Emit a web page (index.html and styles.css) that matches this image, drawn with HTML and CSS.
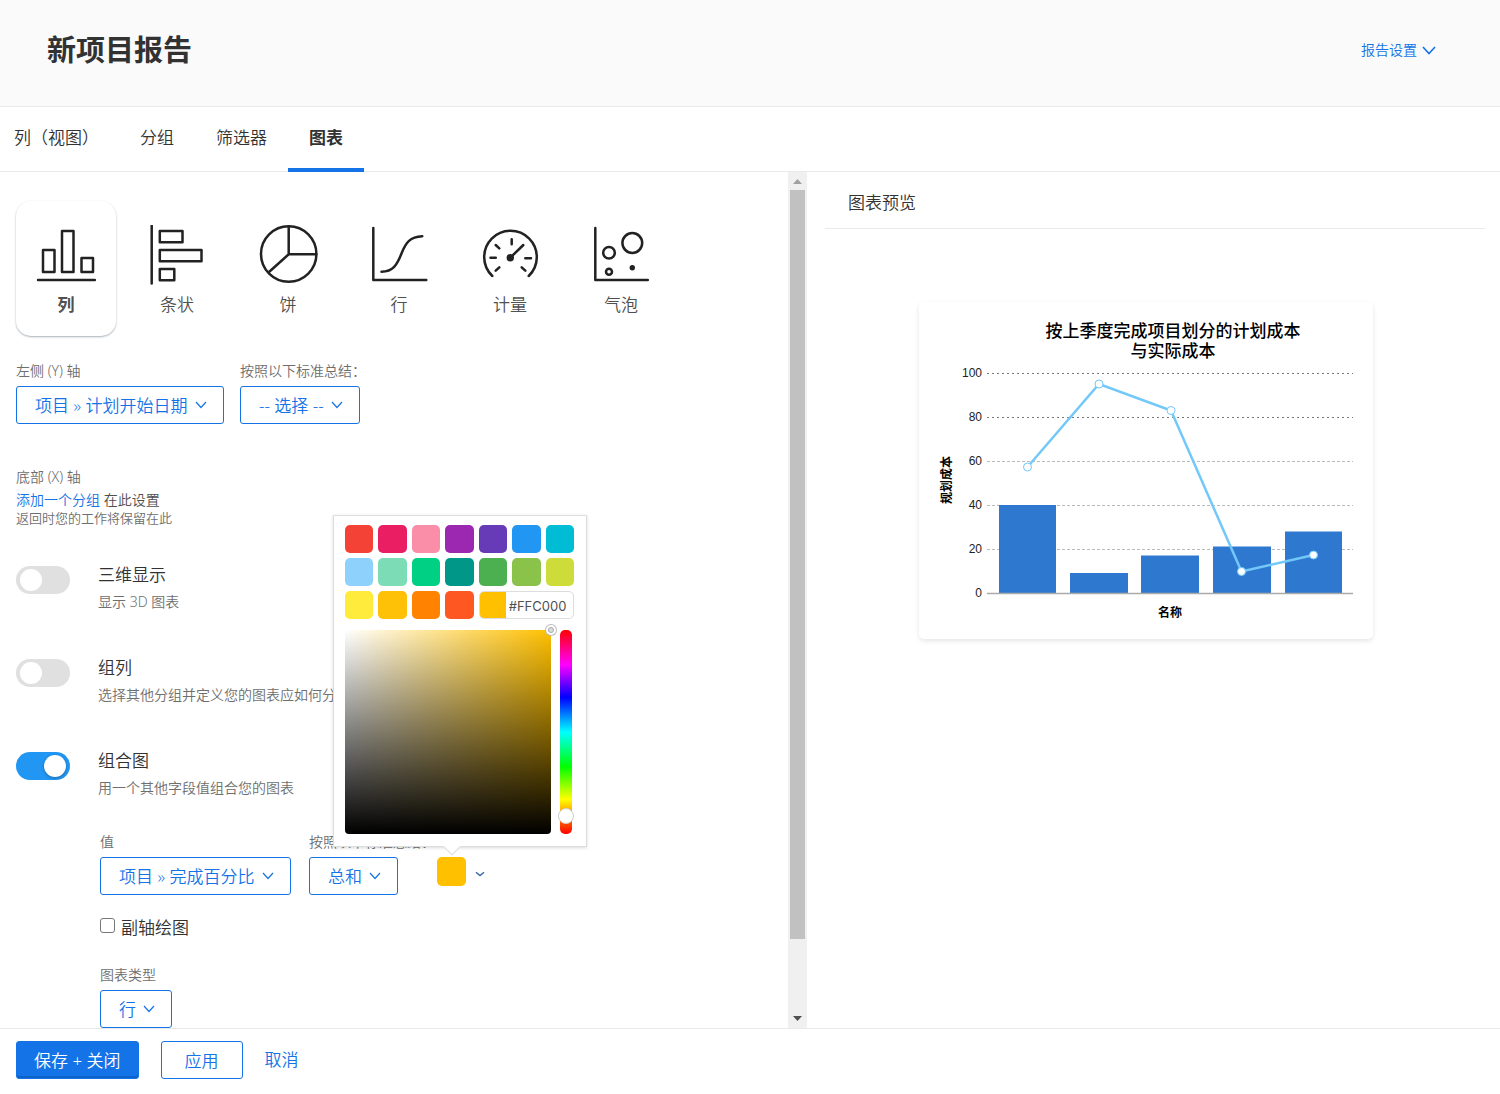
FILE: index.html
```html
<!DOCTYPE html>
<html lang="zh-CN">
<head>
<meta charset="utf-8">
<meta name="viewport" content="width=device-width, initial-scale=1">
<title>新项目报告</title>
<link rel="stylesheet" href="styles.css">
</head>
<body>
<header class="page-header">
  <h1 class="page-title">新项目报告</h1>
  <a class="settings-link" href="#settings">报告设置
    <svg width="14" height="9" viewBox="0 0 14 9" aria-hidden="true"><path d="M1 1l6 6.500L13 1"/></svg>
  </a>
</header>

<nav class="tabs">
  <a class="tab" href="#columns">列（视图）</a>
  <a class="tab" href="#groupings">分组</a>
  <a class="tab" href="#filters">筛选器</a>
  <a class="tab tab-active" href="#chart" aria-current="page">图表</a>
</nav>

<main class="workspace">
  <section class="editor">
    <div class="editor-content">
      <div class="chart-types">
        <button type="button" class="chart-type chart-type-active" aria-pressed="true">
          <svg class="type-icon" viewBox="0 0 60 60" aria-hidden="true"><path d="M2 55h57M7 25h11.500v22h-11.500zM26 6h11.500v41h-11.500zM45.500 33h11.500v14h-11.500z"/></svg>
          <span>列</span>
        </button>
        <button type="button" class="chart-type" aria-pressed="false">
          <svg class="type-icon" viewBox="0 0 60 60" aria-hidden="true"><path d="M4.700 0.500v58M12.800 6h22.700v11.300h-22.700zM12.800 25h41.700v11.300h-41.700zM12.800 44h14.500v11.300h-14.500z"/></svg>
          <span>条状</span>
        </button>
        <button type="button" class="chart-type" aria-pressed="false">
          <svg class="type-icon" viewBox="0 0 60 60" aria-hidden="true"><circle cx="30.700" cy="29" r="27.700"/><path d="M30.700 1.500v27.800h27.500M30.700 29.300L11 47"/></svg>
          <span>饼</span>
        </button>
        <button type="button" class="chart-type" aria-pressed="false">
          <svg class="type-icon" viewBox="0 0 60 60" aria-hidden="true"><path d="M4.300 3v52h53M12.500 46.700C24 46.700 28 40 32.500 28.500C37 17 41 12 53.300 11.300"/></svg>
          <span>行</span>
        </button>
        <button type="button" class="chart-type" aria-pressed="false">
          <svg class="type-icon" viewBox="0 0 60 60" aria-hidden="true"><path d="M12.300 51A26.300 26.300 0 1 1 48.700 51M31.700 14.300v5M15.700 20l3.600 3.300M10.500 32.700h5.300M15.700 45.700l3.600-3.400M45.300 33.300h5.700M41.700 42.300l3.600 3.400M30.300 32.700L43.300 20"/><circle class="dot" cx="30.300" cy="32.700" r="3.700"/></svg>
          <span>计量</span>
        </button>
        <button type="button" class="chart-type" aria-pressed="false">
          <svg class="type-icon" viewBox="0 0 60 60" aria-hidden="true"><path d="M4.300 3v52h52.500"/><circle cx="18" cy="27.700" r="5.800"/><circle cx="41.300" cy="18" r="9.900"/><circle cx="18" cy="46.700" r="3"/><circle class="dot" cx="41.300" cy="42.700" r="2.700"/></svg>
          <span>气泡</span>
        </button>
      </div>

      <div class="field-row">
        <div class="field">
          <label for="y-axis">左侧 (Y) 轴</label>
          <select id="y-axis" class="picker"><option>项目 » 计划开始日期</option></select>
        </div>
        <div class="field">
          <label for="y-summary">按照以下标准总结：</label>
          <select id="y-summary" class="picker"><option>-- 选择 --</option></select>
        </div>
      </div>

      <div class="x-axis">
        <p class="x-axis-label">底部 (X) 轴</p>
        <p class="x-axis-action"><a href="#groupings">添加一个分组</a> 在此设置</p>
        <p class="x-axis-hint">返回时您的工作将保留在此</p>
      </div>

      <div class="options">
        <div class="option">
          <input class="switch" type="checkbox" role="switch" id="opt-3d" aria-describedby="opt-3d-note">
          <div>
            <label class="option-title" for="opt-3d">三维显示</label>
            <p class="option-note" id="opt-3d-note">显示 3D 图表</p>
          </div>
        </div>
        <div class="option">
          <input class="switch" type="checkbox" role="switch" id="opt-group" aria-describedby="opt-group-note">
          <div>
            <label class="option-title" for="opt-group">组列</label>
            <p class="option-note" id="opt-group-note">选择其他分组并定义您的图表应如何分组</p>
          </div>
        </div>
        <div class="option">
          <input class="switch" type="checkbox" role="switch" id="opt-combo" aria-describedby="opt-combo-note" checked>
          <div>
            <label class="option-title" for="opt-combo">组合图</label>
            <p class="option-note" id="opt-combo-note">用一个其他字段值组合您的图表</p>
          </div>
        </div>
      </div>

      <div class="combo">
        <div class="combo-row">
          <div class="field-row combo-fields">
            <div class="field">
              <label for="combo-value">值</label>
              <select id="combo-value" class="picker"><option>项目 » 完成百分比</option></select>
            </div>
            <div class="field">
              <label for="combo-summary">按照以下标准总结：</label>
              <select id="combo-summary" class="picker"><option>总和</option></select>
            </div>
          </div>
          <div class="color-control">
            <button type="button" class="color-trigger" aria-label="颜色" aria-expanded="true">
              <span class="color-current"></span>
              <svg width="10" height="6" viewBox="0 0 10 6" aria-hidden="true"><path d="M1 1.200l4 3.300 4-3.300"/></svg>
            </button>
            <div class="color-popover">
              <div class="swatches">
                <button type="button" class="swatch red" aria-label="#F44336"></button>
                <button type="button" class="swatch crimson" aria-label="#E91E63"></button>
                <button type="button" class="swatch pink" aria-label="#FA8DA7"></button>
                <button type="button" class="swatch purple" aria-label="#9C27B0"></button>
                <button type="button" class="swatch violet" aria-label="#673AB7"></button>
                <button type="button" class="swatch blue" aria-label="#2196F3"></button>
                <button type="button" class="swatch cyan" aria-label="#00BCD4"></button>
                <button type="button" class="swatch sky" aria-label="#8ED1FC"></button>
                <button type="button" class="swatch mint" aria-label="#7BDCB5"></button>
                <button type="button" class="swatch emerald" aria-label="#00D084"></button>
                <button type="button" class="swatch teal" aria-label="#009688"></button>
                <button type="button" class="swatch green" aria-label="#4CAF50"></button>
                <button type="button" class="swatch olive" aria-label="#8BC34A"></button>
                <button type="button" class="swatch lime" aria-label="#CDDC39"></button>
                <button type="button" class="swatch yellow" aria-label="#FFEB3B"></button>
                <button type="button" class="swatch amber" aria-label="#FFC107"></button>
                <button type="button" class="swatch orange" aria-label="#FF8200"></button>
                <button type="button" class="swatch coral" aria-label="#FF5722"></button>
                <div class="hex-field"><span class="hex-preview"></span><input class="hex-input" type="text" value="#FFC000" aria-label="十六进制颜色"></div>
              </div>
              <div class="mixer">
                <div class="shade-area"><span class="shade-knob"></span></div>
                <input class="hue" type="range" min="0" max="360" value="19" aria-label="色相">
              </div>
            </div>
          </div>
        </div>
        <label class="check"><input type="checkbox"> <span>副轴绘图</span></label>
        <div class="field">
          <label for="combo-type">图表类型</label>
          <select id="combo-type" class="picker"><option>行</option></select>
        </div>
      </div>
    </div>
    <div class="scrollbar" aria-hidden="true">
      <svg width="9" height="5" viewBox="0 0 9 5"><path class="arrow-up" d="M0 5L4.500 0L9 5z"/></svg>
      <span class="scroll-thumb"></span>
      <svg width="9" height="5" viewBox="0 0 9 5"><path class="arrow-down" d="M0 0L4.500 5L9 0z"/></svg>
    </div>
  </section>

  <section class="preview">
    <h2 class="preview-title">图表预览</h2>
    <div class="chart-card">
      <svg class="chart" viewBox="0 0 454 337" role="img" aria-label="按上季度完成项目划分的计划成本与实际成本">
        <g class="chart-title">
          <text x="254" y="35">按上季度完成项目划分的计划成本</text>
          <text x="254" y="55">与实际成本</text>
        </g>
        <g class="grid-lines">
          <path class="grid-dark" d="M68 71.500H434M68 115.500H434"/>
          <path d="M68 159.500H434M68 203.500H434M68 247.500H434"/>
        </g>
        <g class="ticks">
          <text x="63" y="75">100</text>
          <text x="63" y="119">80</text>
          <text x="63" y="163">60</text>
          <text x="63" y="207">40</text>
          <text x="63" y="251">20</text>
          <text x="63" y="295">0</text>
        </g>
        <g class="bars">
          <rect x="80" y="203" width="57" height="88"/>
          <rect x="151" y="271" width="58" height="20"/>
          <rect x="222" y="253.500" width="58" height="37.500"/>
          <rect x="294" y="244.500" width="58" height="46.500"/>
          <rect x="366" y="229.500" width="57" height="61.500"/>
        </g>
        <path class="baseline" d="M68 291.500H434"/>
        <polyline class="series" points="108.500,165 180,82 252,108.500 322.500,269.500 394.500,253"/>
        <g class="points">
          <circle cx="108.500" cy="165" r="4"/>
          <circle cx="180" cy="82" r="4"/>
          <circle cx="252" cy="108.500" r="4"/>
          <circle cx="322.500" cy="269.500" r="4"/>
          <circle cx="394.500" cy="253" r="4"/>
        </g>
        <g class="axis-names">
          <text x="251" y="315">名称</text>
          <text transform="translate(32 178) rotate(-90)">规划成本</text>
        </g>
      </svg>
    </div>
  </section>
</main>

<footer class="actions">
  <button type="button" class="btn btn-primary">保存 + 关闭</button>
  <button type="button" class="btn btn-outline">应用</button>
  <a class="cancel" href="#cancel">取消</a>
</footer>
</body>
</html>
```
FILE: styles.css
```css
:root {
  --blue: #1473e6;
  --switch-blue: #2196f3;
  --line: #eaeaea;
  --text: #323232;
  --muted: #6e6e6e;
  --selected: #ffc000;
}

* {
  box-sizing: border-box;
}

body {
  margin: 0;
  height: 100vh;
  display: flex;
  flex-direction: column;
  background: #fff;
  color: var(--text);
  font-family: "Noto Sans", "Noto Sans CJK SC", sans-serif;
  font-size: 17px;
  font-weight: 350;
  line-height: 24px;
}

h1,
h2,
p {
  margin: 0;
}

a {
  color: var(--blue);
  text-decoration: none;
}

button,
select,
input {
  font: inherit;
}

/* Header */
.page-header {
  display: flex;
  align-items: center;
  justify-content: space-between;
  padding: 30px 64px 36px 47px;
  background: #fafafa;
  border-bottom: 1px solid var(--line);
}

.page-title {
  font-size: 29px;
  font-weight: 700;
  line-height: 40px;
}

.settings-link {
  display: flex;
  align-items: center;
  gap: 5px;
  font-size: 14px;
  line-height: 20px;
}

.settings-link svg {
  fill: none;
  stroke: var(--blue);
  stroke-width: 1.6;
}

/* Tabs */
.tabs {
  display: flex;
  border-bottom: 1px solid var(--line);
}

.tab {
  margin-bottom: -1px;
  padding: 19px 21px 18px;
  border-bottom: 4px solid transparent;
  color: var(--text);
}

.tab:first-child {
  padding: 19px 20px 18px 14px;
}

.tab-active {
  border-color: var(--blue);
  font-weight: 700;
}

/* Workspace */
.workspace {
  flex: 1;
  min-height: 0;
  display: flex;
}

.editor {
  flex: 0 0 53.8%;
  display: flex;
  min-width: 0;
}

.editor-content {
  flex: 1;
  min-width: 0;
  padding: 29px 16px 0;
  overflow: auto;
  scrollbar-width: none;
}

.scrollbar {
  flex: 0 0 19px;
  display: flex;
  flex-direction: column;
  align-items: center;
  padding: 7px 0;
  background: #f0f0f0;
}

.scroll-thumb {
  width: 15px;
  height: 89%;
  margin: 6px 0 auto;
  background: #c1c1c1;
}

.arrow-up {
  fill: #a0a0a0;
}

.arrow-down {
  fill: #505050;
}

/* Chart type list */
.chart-types {
  display: flex;
  gap: 11px;
}

.chart-type {
  flex: 0 0 100px;
  display: flex;
  flex-direction: column;
  align-items: center;
  gap: 8px;
  padding: 24px 0 19px;
  border: 0;
  border-radius: 15px;
  background: #fff;
  color: #505050;
}

.chart-type-active {
  box-shadow: 0 1px 2px rgba(60, 80, 100, 0.45);
  font-weight: 700;
}

.type-icon {
  width: 60px;
  height: 60px;
  fill: none;
  stroke: #222;
  stroke-width: 2.5;
  stroke-linecap: round;
  stroke-linejoin: round;
}

.type-icon .dot {
  fill: #222;
  stroke: none;
}

/* Fields */
.field-row {
  display: flex;
  gap: 16px;
  margin-top: 25px;
}

.field {
  display: flex;
  flex-direction: column;
  align-items: flex-start;
  gap: 5px;
}

.field label {
  color: var(--muted);
  font-size: 14px;
  line-height: 20px;
  white-space: nowrap;
}

.picker {
  appearance: none;
  height: 38px;
  padding: 1px 35px 0 18px;
  border: 1px solid var(--blue);
  border-radius: 3px;
  background: #fff url("data:image/svg+xml,%3Csvg xmlns='http://www.w3.org/2000/svg' width='12' height='8' viewBox='0 0 12 8' fill='none' stroke='%231473e6' stroke-width='1.200'%3E%3Cpath d='M1 1l5 5.500L11 1'/%3E%3C/svg%3E") no-repeat right 16px center;
  color: var(--blue);
}

.x-axis {
  margin-top: 43px;
  font-size: 14px;
  line-height: 20px;
}

.x-axis-label {
  margin-bottom: 3px;
  color: var(--muted);
}

.x-axis-action {
  color: #505050;
}

.x-axis-hint {
  color: var(--muted);
  font-size: 13px;
  line-height: 16px;
}

/* Options */
.options {
  display: grid;
  gap: 44px;
  margin-top: 37px;
}

.option {
  display: grid;
  grid-template-columns: 54px 1fr;
  gap: 28px;
}

.option-title {
  display: block;
  margin-bottom: 5px;
}

.option-note {
  color: var(--muted);
  font-size: 14px;
  line-height: 20px;
}

.switch {
  appearance: none;
  display: flex;
  align-items: center;
  width: 54px;
  height: 28px;
  margin: 3px 0 0;
  padding: 0 4px;
  border-radius: 14px;
  background: #e0e0e0;
}

.switch::before {
  content: "";
  width: 22px;
  height: 22px;
  border-radius: 50%;
  background: #fff;
}

.switch:checked {
  justify-content: flex-end;
  background: var(--switch-blue);
}

.switch:checked::before {
  box-shadow: 0 1px 3px rgba(0, 0, 0, 0.3);
}

/* Combination chart settings */
.combo {
  margin: 34px 0 0 84px;
}

.combo-row {
  display: flex;
  gap: 2px;
}

.combo-fields {
  gap: 18px;
  margin-top: 0;
}

.check {
  display: flex;
  align-items: flex-start;
  gap: 6px;
  margin: 21px 0 25px;
}

.check input {
  appearance: none;
  width: 15px;
  height: 15px;
  margin: 2px 0 0;
  border: 1px solid #767676;
  border-radius: 3px;
  background: #fff;
}

.color-control {
  position: relative;
  align-self: flex-start;
  margin-top: 25px;
}

.color-trigger {
  display: flex;
  align-items: center;
  gap: 9px;
  padding: 0;
  border: 0;
  background: none;
}

.color-trigger svg {
  margin-top: 4px;
  fill: none;
  stroke: #3367b0;
  stroke-width: 1.4;
}

.color-current {
  width: 29px;
  height: 29px;
  border-radius: 5px;
  background: var(--selected);
}

.color-popover {
  position: absolute;
  z-index: 2;
  bottom: calc(100% + 10px);
  left: -104px;
  width: 254px;
  padding: 9px 12px 12px 11px;
  border: 1px solid #ddd;
  background: #fff;
  box-shadow: 0 1px 3px rgba(0, 0, 0, 0.15);
}

.color-popover::after {
  content: "";
  position: absolute;
  top: 100%;
  left: 112px;
  width: 11px;
  height: 11px;
  margin-top: -5px;
  border: solid #ddd;
  border-width: 0 1px 1px 0;
  background: #fff;
  transform: rotate(45deg);
}

.swatches {
  display: grid;
  grid-template-columns: repeat(7, 1fr);
  grid-auto-rows: 28px;
  gap: 5px;
}

.swatch {
  padding: 0;
  border: 0;
  border-radius: 5px;
}

.red { background: #f44336; }
.crimson { background: #e91e63; }
.pink { background: #fa8da7; }
.purple { background: #9c27b0; }
.violet { background: #673ab7; }
.blue { background: #2196f3; }
.cyan { background: #00bcd4; }
.sky { background: #8ed1fc; }
.mint { background: #7bdcb5; }
.emerald { background: #00d084; }
.teal { background: #009688; }
.green { background: #4caf50; }
.olive { background: #8bc34a; }
.lime { background: #cddc39; }
.yellow { background: #ffeb3b; }
.amber { background: #ffc107; }
.orange { background: #ff8200; }
.coral { background: #ff5722; }

.hex-field {
  grid-column: span 3;
  display: flex;
  overflow: hidden;
  border: 1px solid #ddd;
  border-radius: 5px;
}

.hex-preview {
  flex: 0 0 26px;
  background: var(--selected);
}

.hex-input {
  flex: 1;
  min-width: 0;
  padding: 2px 0 0 3px;
  border: 0;
  background: none;
  color: #505050;
  font-family: Inter, sans-serif;
  font-size: 13px;
  font-weight: 400;
}

.mixer {
  display: flex;
  gap: 7px;
  margin-top: 11px;
}

.shade-area {
  position: relative;
  flex: 1;
  height: 204px;
  border-radius: 4px;
  background:
    linear-gradient(to top, #000, transparent),
    linear-gradient(to right, #fff, var(--selected));
}

.shade-knob {
  position: absolute;
  top: -5px;
  right: -5px;
  width: 10px;
  height: 10px;
  border: 2px solid #fff;
  border-radius: 50%;
  background: #ddd;
  box-shadow: 0 0 0 1px #bbb, inset 0 0 0 1px #aaa;
}

.hue {
  appearance: none;
  writing-mode: vertical-lr;
  direction: rtl;
  width: 16px;
  height: 204px;
  margin: 0;
  background: none;
}

.hue::-webkit-slider-runnable-track {
  width: 12px;
  height: 204px;
  border-radius: 5px;
  background: linear-gradient(to top, #f00, #ff0 17%, #0f0 33%, #0ff 50%, #00f 67%, #f0f 83%, #f00);
}

.hue::-webkit-slider-thumb {
  appearance: none;
  width: 16px;
  height: 16px;
  margin-left: -2px;
  border: 1px solid #ccc;
  border-radius: 50%;
  background: #fff;
}

/* Preview */
.preview {
  flex: 1;
  min-width: 0;
  padding: 0 15px 0 18px;
}

.preview-title {
  padding: 19px 23px 13px;
  border-bottom: 1px solid var(--line);
  font-size: 17px;
  font-weight: 350;
}

.chart-card {
  max-width: 454px;
  margin: 73px auto 0 94px;
  border-radius: 5px;
  background: #fff;
  box-shadow: 0 2px 5px rgba(0, 0, 0, 0.1);
}

.chart {
  display: block;
  width: 100%;
}

.chart-title {
  font-size: 17px;
  font-weight: 500;
  text-anchor: middle;
  fill: #000;
}

.ticks {
  font-family: "Liberation Sans", sans-serif;
  font-size: 12px;
  font-weight: 400;
  text-anchor: end;
  fill: #222;
}

.grid-lines {
  fill: none;
  stroke: #bbb;
  stroke-dasharray: 3 2;
}

.grid-dark {
  stroke: #777;
  stroke-dasharray: 2 3;
}

.bars {
  fill: #2e78d0;
}

.baseline {
  stroke: #aaa;
  stroke-width: 1.5;
}

.series {
  fill: none;
  stroke: #73c8fa;
  stroke-width: 2.5;
}

.points {
  fill: #fff;
  stroke: #73c8fa;
}

.axis-names {
  font-size: 12px;
  font-weight: 700;
  text-anchor: middle;
  fill: #000;
}

/* Footer */
.actions {
  display: flex;
  align-items: center;
  gap: 22px;
  padding: 12px 16px 15px;
  border-top: 1px solid var(--line);
}

.btn {
  height: 38px;
  border: 1px solid var(--blue);
  border-radius: 3px;
}

.btn-primary {
  padding: 1px 17px 0;
  background: var(--blue);
  box-shadow: inset 0 -2px 0 #0d62c9;
  color: #fff;
}

.btn-outline {
  padding: 1px 23px 0;
  background: #fff;
  color: var(--blue);
}
```
